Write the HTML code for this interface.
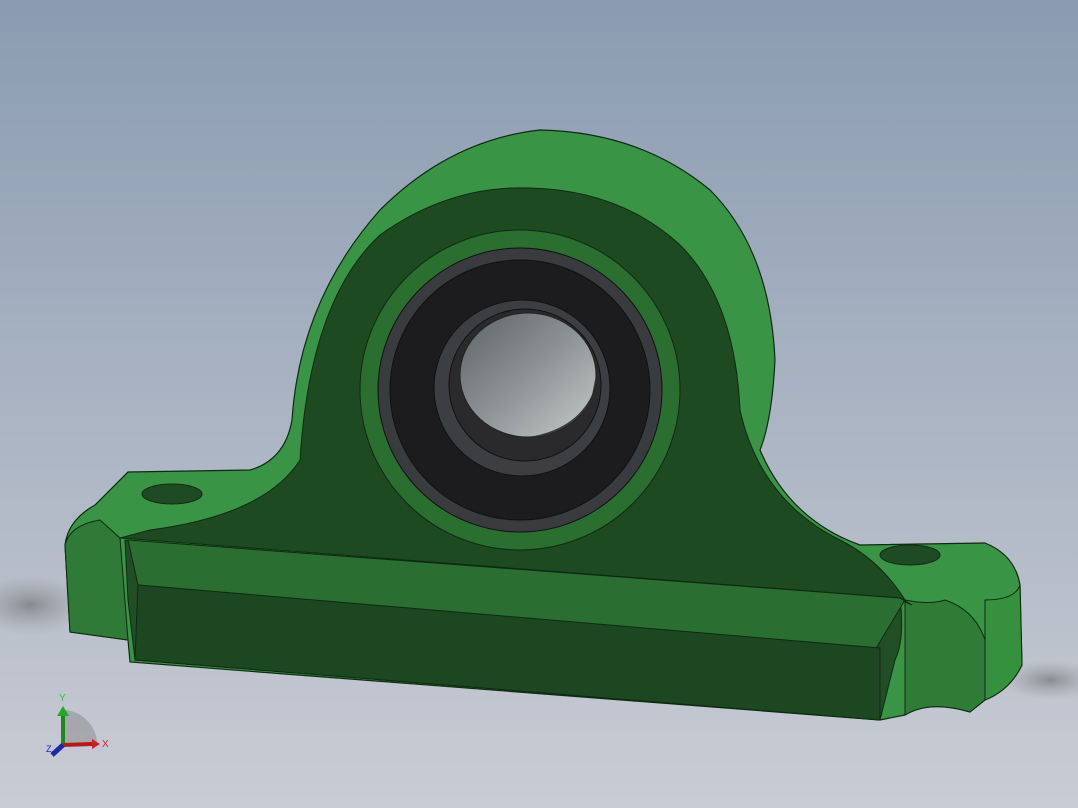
<!DOCTYPE html>
<html><head><meta charset="utf-8"><style>
html,body{margin:0;padding:0;width:1078px;height:808px;overflow:hidden}
svg{display:block}
text{font-family:"Liberation Sans",sans-serif}
</style></head><body>
<svg width="1078" height="808" viewBox="0 0 1078 808" xmlns="http://www.w3.org/2000/svg">
<defs>
<linearGradient id="bg" x1="0" y1="0" x2="0" y2="1">
<stop offset="0" stop-color="#8a9bb1"/><stop offset="1" stop-color="#c9ccd4"/></linearGradient>
<radialGradient id="sh" cx="0.5" cy="0.5" r="0.5">
<stop offset="0" stop-color="#555" stop-opacity="0.5"/><stop offset="1" stop-color="#888" stop-opacity="0"/></radialGradient>
<linearGradient id="bore" x1="0" y1="0" x2="1" y2="1">
<stop offset="0" stop-color="#5d6264"/><stop offset="0.5" stop-color="#8d9394"/><stop offset="1" stop-color="#c6cbcb"/></linearGradient>
</defs>
<rect width="1078" height="808" fill="url(#bg)"/>
<ellipse cx="30" cy="605" rx="60" ry="30" fill="url(#sh)"/>
<ellipse cx="1050" cy="680" rx="50" ry="20" fill="url(#sh)"/>
<path d="M65,545 Q68,520 95,505 L128,472 L250,470 Q285,460 292,420 Q300,300 380,210 Q450,140 540,130 Q640,132 710,190 Q770,250 775,360 Q772,420 760,450 Q790,520 860,545 L985,543 Q1015,555 1020,585 L1022,665 Q1010,690 985,700 L970,712 Q930,700 905,715 L880,720 L130,662 L128,640 L70,632 Z" fill="#3a9446" stroke="#0f2a12" stroke-width="1.2"/>
<path d="M65,545 Q70,525 100,520 L120,538 L128,640 L70,632 Z" fill="#2e7a36" stroke="#0f2a12" stroke-width="1"/>
<path d="M905,600 Q930,605 945,600 Q975,610 985,640 L985,700 L970,712 Q930,700 905,715 Z" fill="#2f7c37" stroke="#0f2a12" stroke-width="1"/>
<path d="M985,600 Q1015,600 1020,585 L1022,665 Q1010,690 985,700 Z" fill="#36913f" stroke="#0f2a12" stroke-width="1"/>
<path d="M120,538 L150,530 Q265,515 300,460 Q310,300 380,235 Q450,185 530,188 Q620,190 680,245 Q735,300 740,410 Q760,500 840,540 Q880,560 905,600 L900,598 Z" fill="#1e4a22" stroke="#0f2a12" stroke-width="1"/>
<path d="M125,540 L900,598 Q905,640 895,660 L880,720 L135,660 L128,600 Z" fill="#214e25" stroke="#0f2a12" stroke-width="1"/>
<path d="M128,540 L900,598 L912,605 Q900,600 905,600 L875,650 L138,585 Z" fill="#2b6e31" stroke="#0f2a12" stroke-width="1"/>
<path d="M138,585 L880,648 L880,720 L135,660 Z" fill="#1d4721" stroke="#0f2a12" stroke-width="1"/>
<ellipse cx="172" cy="494" rx="30" ry="10" fill="#1f4b24" stroke="#0f2a12"/>
<ellipse cx="910" cy="555" rx="30" ry="10" fill="#1f4b24" stroke="#0f2a12"/>
<circle cx="520" cy="390" r="160" fill="#2a6e30" stroke="#0f2a12"/>
<circle cx="520" cy="390" r="142" fill="#3a3b3e" stroke="#111"/>
<circle cx="520" cy="390" r="130" fill="#1c1c1e" stroke="#111"/>
<circle cx="522" cy="388" r="88" fill="#3d3e41" stroke="#111"/>
<circle cx="525" cy="385" r="76" fill="#2a2a2c" stroke="#111"/>
<ellipse cx="528" cy="375" rx="68" ry="62" fill="url(#bore)" stroke="#222"/>
<path d="M596,375 A68,62 0 0 1 528,437 Q575,430 592,395 Z" fill="#3a3b3e"/>
<path d="M65,745 L65,710 A35,35 0 0 1 97,742 Z" fill="#888" opacity="0.5"/>
<line x1="63" y1="745" x2="63" y2="715" stroke="#1a8a1a" stroke-width="4"/>
<polygon points="57,716 69,716 63,706" fill="#22aa22"/>
<line x1="63" y1="745" x2="92" y2="744" stroke="#b31a1a" stroke-width="4"/>
<polygon points="92,739 92,749 100,744" fill="#c22"/>
<line x1="63" y1="745" x2="52" y2="755" stroke="#1a2aaa" stroke-width="5"/>
<text x="59" y="701" font-size="10" fill="#2c2">Y</text>
<text x="102" y="747" font-size="10" fill="#d22">X</text>
<text x="46" y="752" font-size="9" fill="#22c">Z</text>
</svg>
</body></html>
